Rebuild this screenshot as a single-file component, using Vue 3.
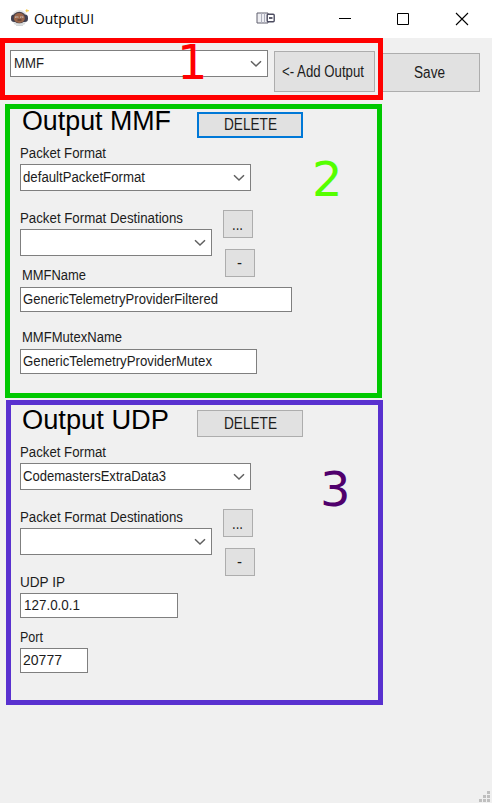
<script setup>
import { h } from 'vue'

const Txt = (p) =>
  h('svg', { class: 'txt', width: p.w, height: p.h || 20 }, [
    h('text', { x: 0, y: p.y || 14, textLength: p.w, lengthAdjust: 'spacingAndGlyphs' }, p.t),
  ])
Txt.props = ['t', 'w', 'h', 'y']

const Chevron = () =>
  h('svg', { class: 'chevron', width: 12, height: 8, viewBox: '0 0 12 8' }, [
    h('path', { d: 'M1 1.2 L6 6 L11 1.2', fill: 'none', stroke: '#606060', 'stroke-width': 1.5 }),
  ])

const outputs = [
  {
    id: 'mmf', title: 'Output MMF', titleW: 149, format: 'defaultPacketFormat', formatW: 122, mark: '2',
    fields: [
      { cls: 'name', label: 'MMFName', labelW: 64, value: 'GenericTelemetryProviderFiltered', valueW: 195 },
      { cls: 'mutex', label: 'MMFMutexName', labelW: 100, value: 'GenericTelemetryProviderMutex', valueW: 189 },
    ],
  },
  {
    id: 'udp', title: 'Output UDP', titleW: 147, format: 'CodemastersExtraData3', formatW: 143, mark: '3',
    fields: [
      { cls: 'ip', label: 'UDP IP', labelW: 45, value: '127.0.0.1', valueW: 56 },
      { cls: 'port', label: 'Port', labelW: 23, value: '20777', valueW: 39 },
    ],
  },
]
</script>

<template>
  <div class="window">
    <header class="titlebar">
      <svg class="app-icon" width="20" height="20" viewBox="0 0 20 20">
        <ellipse cx="9.5" cy="10" rx="7.8" ry="8" fill="#e3e5e6" />
        <rect x="1" y="6.5" width="17" height="7.5" rx="3.2" fill="#414152" />
        <ellipse cx="9.3" cy="9.7" rx="6.5" ry="5.9" fill="#46404a" />
        <ellipse cx="9.3" cy="10" rx="5.5" ry="5.1" fill="#9a6549" />
        <path d="M5.3 9.2h3M10.3 9.2h3" stroke="#f0dfd1" stroke-width="1.3" />
        <path d="M6.5 9.2h1M11.3 9.2h1M7.5 12h4" stroke="#4b302a" stroke-width="1" />
        <path d="M4 15.8h11M6 17.5h7" stroke="#c9ced0" stroke-width=".7" />
        <path d="M15.5 2.7h3.5M16.8 1.2v3" stroke="#f5c944" stroke-width="1.1" />
      </svg>
      <Txt class="caption" t="OutputUI" :w="60" />
      <svg class="dock" width="20" height="13" viewBox="0 0 20 13">
        <path d="M1 1h11v10h-11z" fill="#eeeef2" stroke="#60606f" />
        <path d="M5.5 1v10M8.5 1v10" stroke="#aeb0bd" />
        <rect x="11.2" y="2.3" width="7" height="7.5" rx="1" fill="#fff" stroke="#4c4c60" stroke-width="1.4" />
        <path d="M13 6h3.5" stroke="#34344a" stroke-width="1.6" />
      </svg>
      <svg class="controls" width="132" height="14" viewBox="0 0 132 14" fill="none" stroke="#000">
        <path d="M0 6.5h12" />
        <path d="M58.5 1.5h11v11h-11z" />
        <path d="M117 1l12 12M129 1l-12 12" stroke-width="1.1" />
      </svg>
    </header>

    <div class="toolbar">
      <section class="add-bar">
        <div class="combo kind"><Txt t="MMF" :w="30" :y="17.4" :h="24" /><Chevron /></div>
        <button class="btn add"><Txt t="&lt;- Add Output" :w="82" /></button>
        <span class="mark mark-1">1</span>
      </section>
      <button class="btn save"><Txt t="Save" :w="31" /></button>
    </div>

    <section v-for="o in outputs" :key="o.id" class="panel" :class="o.id">
      <div class="head">
        <Txt class="title" :t="o.title" :w="o.titleW" :h="30" :y="21.3" />
        <button class="btn delete"><Txt t="DELETE" :w="53" :y="15" /></button>
      </div>
      <Txt class="label" t="Packet Format" :w="86" />
      <div class="combo format"><Txt :t="o.format" :w="o.formatW" :y="16.8" :h="24" /><Chevron /></div>
      <div class="destinations">
        <div class="dest-main">
          <Txt class="label" t="Packet Format Destinations" :w="163" />
          <div class="combo dest"><Chevron /></div>
        </div>
        <div class="dest-actions">
          <button class="btn small"><Txt t="..." :w="11" :y="16" /></button>
          <button class="btn small minus"><Txt t="-" :w="5" :y="15" /></button>
        </div>
      </div>
      <div v-for="f in o.fields" :key="f.cls" class="field" :class="f.cls">
        <Txt class="label" :t="f.label" :w="f.labelW" />
        <div class="input"><Txt :t="f.value" :w="f.valueW" :h="23" :y="16.3" /></div>
      </div>
      <span class="mark">{{ o.mark }}</span>
    </section>

    <svg class="grip" width="12" height="12" viewBox="0 0 12 12" fill="#bfbfbf">
      <path d="M8 0h3v3h-3zM4 4h3v3h-3zM8 4h3v3h-3zM0 8h3v3h-3zM4 8h3v3h-3zM8 8h3v3h-3z" />
    </svg>
  </div>
</template>

<style>
body { margin: 0; }
.txt { display: block; flex: none; overflow: visible; fill: #1c1c1c; }
.chevron { display: block; flex: none; }
</style>

<style scoped>
.window {
  position: relative;
  width: 492px;
  height: 803px;
  overflow: hidden;
  background: #f0f0f0;
  font: 15.2px "Liberation Sans", Arial, sans-serif;
}
.titlebar { display: flex; height: 38px; background: #fff; }
.app-icon { margin: 8px 0 0 10px; }
.caption { margin: 10px 0 0 4px; font: 15px "Open Sans", "Noto Sans", sans-serif; fill: #000; }
.dock { margin: 12px 0 0 162px; }
.controls { margin: 12px 0 0 63px; }
.toolbar { display: flex; height: 66px; }
.add-bar {
  position: relative;
  display: flex;
  box-sizing: border-box;
  width: 383px;
  height: 62px;
  padding: 7px 0 0 5px;
  border: 5px solid #f00;
}
.combo {
  display: flex;
  box-sizing: border-box;
  height: 27px;
  padding: 0 5px 0 2px;
  border: 1px solid #7f7f7f;
  background: #fff;
}
.combo .chevron { margin: 9px 0 0 auto; }
.kind { width: 258px; padding-left: 3px; }
.format { width: 231px; }
.dest { width: 192px; }
.btn {
  display: flex;
  align-items: center;
  justify-content: center;
  box-sizing: border-box;
  padding: 0;
  border: 1px solid #adadad;
  border-radius: 0;
  background: #e1e1e1;
  font: inherit;
  font-size: 15.8px;
}
.add { width: 101px; height: 41px; margin: 1px 0 0 6px; padding: 2px 4px 0 0; }
.save { width: 97px; height: 39px; margin-top: 15px; padding: 2px 4px 0 0; border-left: 0; }
.panel { position: relative; box-sizing: border-box; width: 377px; border: 5px solid; }
.mmf { height: 294px; margin-left: 5px; padding-left: 10px; border-color: #00c800; }
.udp { height: 305px; margin: 2px 0 0 6px; padding: 3px 0 0 9px; border-color: #5931cf; }
.head { display: grid; grid-template-columns: 177px 106px; height: 35px; }
.title { margin-left: 2px; font-size: 27px; fill: #000; }
.delete { height: 27px; margin-top: 2px; }
.mmf .delete { height: 26px; margin-top: 3px; border: 2px solid #0078d7; }
.destinations { display: flex; height: 47px; margin-top: 18px; }
.dest-main { width: 203px; }
.dest-actions { padding-top: 1px; }
.small { width: 30px; height: 28px; padding-right: 1px; }
.minus { margin: 11px 0 0 2px; }
.input {
  box-sizing: border-box;
  height: 25px;
  margin-top: 1px;
  padding-left: 2px;
  border: 1px solid #7f7f7f;
  background: #fff;
}
.name { margin-top: 10px; }
.name .input { width: 272px; }
.mutex { margin-top: 16px; }
.mutex .input { width: 237px; }
.name .label, .mutex .label { margin-left: 2px; }
.ip { margin-top: 18px; }
.ip .input { width: 158px; margin-top: 0; padding-left: 3px; }
.port { margin-top: 10px; }
.port .input { width: 68px; margin-top: 0; }
.mark {
  position: absolute;
  font: 48px/56px "DejaVu Sans", sans-serif;
}
.mark-1 { left: 172px; top: -9px; color: #f00; }
.mmf .mark { left: 302px; top: 42px; color: #5f0; }
.udp .mark { left: 309px; top: 56px; color: #50006c; }
.grip { position: absolute; right: 1px; bottom: 0; }
</style>
